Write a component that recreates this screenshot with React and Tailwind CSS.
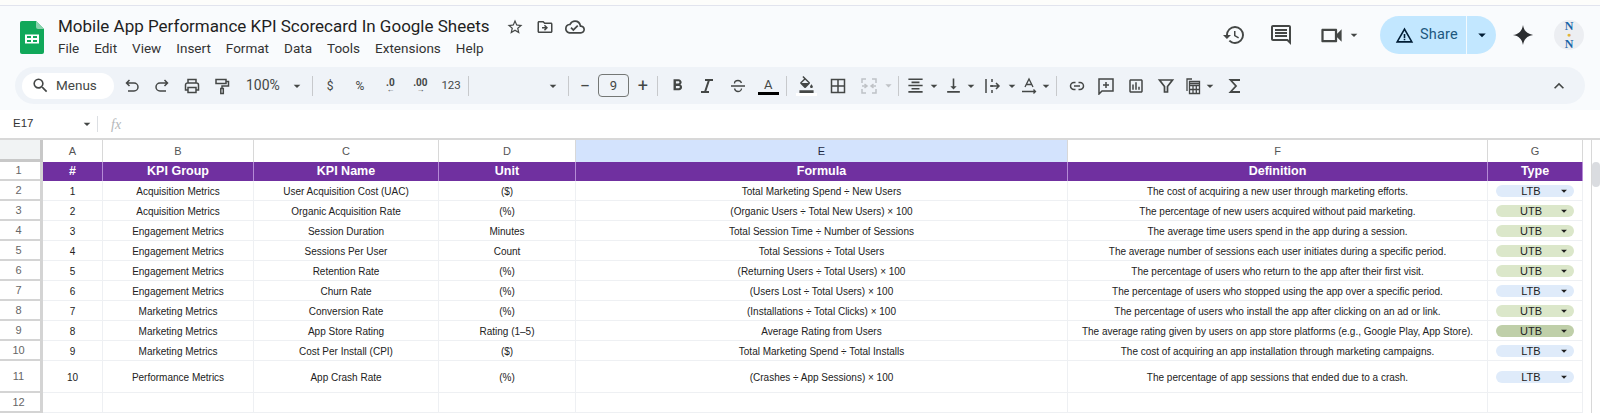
import React from "react";
import {
  MdArrowDropDown,
  MdExpandLess,
  MdFormatAlignCenter,
  MdFormatBold,
  MdFormatColorFill,
  MdHistory,
  MdOutlineCloudDone,
  MdOutlineComment,
  MdOutlineDriveFileMove,
  MdOutlineInsertChart,
  MdOutlineStarBorder,
  MdOutlineVideocam,
  MdSearch,
  MdVerticalAlignBottom,
  MdWarningAmber,
} from "react-icons/md";

const rows = [
  ["1", "Acquisition Metrics", "User Acquisition Cost (UAC)", "($)", "Total Marketing Spend ÷ New Users", "The cost of acquiring a new user through marketing efforts.", "LTB"],
  ["2", "Acquisition Metrics", "Organic Acquisition Rate", "(%)", "(Organic Users ÷ Total New Users) × 100", "The percentage of new users acquired without paid marketing.", "UTB"],
  ["3", "Engagement Metrics", "Session Duration", "Minutes", "Total Session Time ÷ Number of Sessions", "The average time users spend in the app during a session.", "UTB"],
  ["4", "Engagement Metrics", "Sessions Per User", "Count", "Total Sessions ÷ Total Users", "The average number of sessions each user initiates during a specific period.", "UTB"],
  ["5", "Engagement Metrics", "Retention Rate", "(%)", "(Returning Users ÷ Total Users) × 100", "The percentage of users who return to the app after their first visit.", "UTB"],
  ["6", "Engagement Metrics", "Churn Rate", "(%)", "(Users Lost ÷ Total Users) × 100", "The percentage of users who stopped using the app over a specific period.", "LTB"],
  ["7", "Marketing Metrics", "Conversion Rate", "(%)", "(Installations ÷ Total Clicks) × 100", "The percentage of users who install the app after clicking on an ad or link.", "UTB"],
  ["8", "Marketing Metrics", "App Store Rating", "Rating (1–5)", "Average Rating from Users", "The average rating given by users on app store platforms (e.g., Google Play, App Store).", "UTBD"],
  ["9", "Marketing Metrics", "Cost Per Install (CPI)", "($)", "Total Marketing Spend ÷ Total Installs", "The cost of acquiring an app installation through marketing campaigns.", "LTB"],
  ["10", "Performance Metrics", "App Crash Rate", "(%)", "(Crashes ÷ App Sessions) × 100", "The percentage of app sessions that ended due to a crash.", "LTB"],
];

const cols = "grid grid-cols-[43px_60px_151px_185px_137px_492px_420px_95px_9px_8px]";

function Sep({ className = "mx-[7px]" }) {
  return <div className={"h-[20px] w-px bg-[#c7c9cc] " + className} />;
}

function Caret({ className = "" }) {
  return <MdArrowDropDown className={"text-[16px] text-[#444746] " + className} />;
}

// toolbar glyph drawn on an 18 box
function Glyph({ d, className = "", width = 1.5, color = "#444746" }) {
  return (
    <svg viewBox="0 0 18 18" className={"h-[18px] w-[18px] shrink-0 " + className} fill="none" stroke={color} strokeWidth={width}>
      <path d={d} />
    </svg>
  );
}

function Chip({ type }) {
  const label = type === "UTBD" ? "UTB" : type;
  const bg = type === "LTB" ? "bg-[#dfebfa]" : type === "UTBD" ? "bg-[#bfcfa9]" : "bg-[#dbe7ca]";
  return (
    <div className={"relative mx-auto flex h-[12px] w-[78px] items-center justify-center rounded-full pr-[8px] text-[11px] " + bg}>
      <span>{label}</span>
      <MdArrowDropDown className="absolute right-[3px] text-[14px] text-[#222]" />
    </div>
  );
}

function Row({ num, row, height }) {
  return (
    <div className={cols + " text-center text-[10px] text-[#222] " + height}>
      <div className="flex items-center justify-center border-r-[3px] border-b-2 border-[#d4d4d4] bg-white pr-[3px] text-[11px] text-[#666]">{num}</div>
      {row.map((cell, i) => (
        <div key={i} className="flex items-center justify-center border-r border-b border-[#eef0f3] pt-px whitespace-nowrap">
          {cell === null ? "" : i === 6 ? <Chip type={cell} /> : cell}
        </div>
      ))}
      <div className="border-r border-[#d8d8d8]" />
      <div className="bg-white" />
    </div>
  );
}

export default function App() {
  return (
    <div className="h-[414px] w-[1600px] overflow-hidden bg-white font-['Liberation_Sans',Arial,sans-serif]">
      <div className="h-[110px] border-t-[5px] border-[#fdfdfb] bg-[#f9fbfd]">
        <div className="h-px bg-[#e2e4ee]" />
        <div className="flex h-[61px] items-start pl-[20px] pr-[16px] font-['Roboto',sans-serif] text-[#1f1f1f]">
          <svg viewBox="0 0 24 33" className="mt-[15px] h-[33px] w-[24px]">
            <path d="M2 0h14l8 8v23a2 2 0 0 1-2 2H2a2 2 0 0 1-2-2V2a2 2 0 0 1 2-2z" fill="#11a85a" />
            <path d="M16 0l8 8h-6a2 2 0 0 1-2-2z" fill="#8ad3ae" />
            <path d="M5 13.500h14v9H5z M7 15v2h4v-2z M13 15v2h4v-2z M7 19v2h4v-2z M13 19v2h4v-2z" fill="#fff" fillRule="evenodd" />
          </svg>
          <div className="ml-[14px] mt-[10px]">
            <div className="flex h-[22px] items-center">
              <span className="w-[440px] text-[17px] whitespace-nowrap">Mobile App Performance KPI Scorecard In Google Sheets</span>
              <MdOutlineStarBorder className="ml-[8px] text-[18px] text-[#444746]" />
              <MdOutlineDriveFileMove className="ml-[12px] text-[18px] text-[#444746]" />
              <MdOutlineCloudDone className="ml-[11px] text-[20px] text-[#444746]" />
            </div>
            <div className="flex gap-[15px] text-[13.500px] text-[#333]">
              <span>File</span>
              <span>Edit</span>
              <span>View</span>
              <span>Insert</span>
              <span>Format</span>
              <span>Data</span>
              <span>Tools</span>
              <span>Extensions</span>
              <span>Help</span>
            </div>
          </div>
          <div className="ml-auto mt-[10px] flex items-center text-[#444746]">
            <MdHistory className="text-[24px]" />
            <MdOutlineComment className="ml-[23px] text-[24px]" />
            <MdOutlineVideocam className="ml-[25px] text-[27px]" />
            <Caret className="ml-[1px]" />
            <div className="ml-[18px] flex h-[38px] w-[116px] items-center rounded-full bg-[#c2e7ff]">
              <MdWarningAmber className="ml-[15px] text-[19px] text-[#001d35]" />
              <span className="ml-[6px] w-[46px] text-[14.500px] tracking-[0.2px] text-[#20587e]">Share</span>
              <div className="h-full w-px bg-[#f3fafe]" />
              <MdArrowDropDown className="ml-[6px] text-[18px] text-[#001d35]" />
            </div>
            <svg viewBox="0 0 24 24" className="ml-[16px] h-[22px] w-[22px]">
              <path d="M12 1c1 6.500 4.500 10 11 11-6.500 1-10 4.500-11 11-1-6.500-4.500-10-11-11 6.500-1 10-4.500 11-11z" fill="#2b2d30" />
            </svg>
            <div className="ml-[20px] flex h-[30px] w-[30px] flex-col items-center justify-center rounded-full bg-[#eceef2] font-['Liberation_Serif',serif] text-[12px] leading-[10px] font-bold text-[#1b66a8]">
              <span>N</span>
              <span className="h-[8px] text-[7px] leading-[8px] text-[#e2b33c]">●</span>
              <span>N</span>
            </div>
          </div>
        </div>
        <div className="mx-[15px] flex h-[37px] items-center rounded-full bg-[#eff3f8] pl-[7px] pr-[16px] font-['Roboto',sans-serif] text-[#444746]">
          <div className="flex h-[26px] w-[92px] items-center rounded-full bg-white pl-[9px]">
            <MdSearch className="text-[19px]" />
            <span className="ml-[6px] text-[13.500px]">Menus</span>
          </div>
          <Glyph className="ml-[9px]" d="M6.500 3L3.500 6l3 3M3.500 6H11a4 4 0 0 1 0 8H5" />
          <Glyph className="ml-[12px] -scale-x-100" d="M6.500 3L3.500 6l3 3M3.500 6H11a4 4 0 0 1 0 8H5" />
          <Glyph className="ml-[12px]" d="M5 6V2.500h8V6M5 13H2.500V8a2 2 0 0 1 2-2h9a2 2 0 0 1 2 2v5H13M5 10.500h8v5H5z" />
          <Glyph className="ml-[12px]" d="M3 2.500h10v4H3zM13 4.500h2.500V9H9v2.500M7.800 11.500h2.500v5H7.800z" />
          <span className="ml-[15px] text-[14px]">100%</span>
          <Caret className="ml-[9px]" />
          <Sep />
          <span className="ml-[7px] text-[12px]">$</span>
          <span className="ml-[22px] text-[12px]">%</span>
          <span className="ml-[18px] flex w-[16px] flex-col items-center text-[10px] leading-[9px] font-bold">.0<span className="text-[8px] leading-[6px]">←</span></span>
          <span className="ml-[14px] flex w-[16px] flex-col items-center text-[10px] leading-[9px] font-bold">.00<span className="text-[8px] leading-[6px]">→</span></span>
          <span className="ml-[13px] text-[11.500px]">123</span>
          <Sep />
          <div className="w-[69px]" />
          <Caret />
          <Sep />
          <span className="ml-[2px] w-[14px] text-center text-[18px]">−</span>
          <div className="ml-[6px] flex h-[23px] w-[31px] items-center justify-center rounded-[4px] border border-[#747775] text-[13px]">9</div>
          <span className="ml-[7px] w-[14px] text-center text-[18px]">+</span>
          <Sep />
          <MdFormatBold className="ml-[3px] text-[19px]" />
          <Glyph className="ml-[11px]" width={2} d="M7 3h8M3 15h8M11 3L7 15" />
          <Glyph className="ml-[13px]" width={1.3} d="M2 9h14M5.500 6.500c0-2 1.500-3 3.500-3s3 1 3.500 2.500M5.500 11.500c.5 2 2 3 3.500 3s3.500-1 3.500-3" />
          <div className="ml-[11px] flex w-[21px] flex-col items-center">
            <span className="text-[13px] leading-[15px]">A</span>
            <div className="h-[3px] w-full bg-black" />
          </div>
          <Sep />
          <div className="ml-[2px] flex w-[21px] flex-col items-center">
            <MdFormatColorFill className="text-[17px]" />
            <div className="h-[3px] w-full bg-white" />
          </div>
          <Glyph className="ml-[12px]" d="M2.500 2.500h13v13h-13zM9 2.500v13M2.500 9h13" />
          <Glyph className="ml-[13px]" color="#bfc2c6" d="M2 6V2h4M12 2h4v4M16 12v4h-4M6 16H2v-4M2 9h4.500M4.500 7L7 9l-2.500 2M16 9h-4.500M13.500 7L11 9l2.500 2" />
          <MdArrowDropDown className="ml-[3px] -mr-[5px] text-[15px] text-[#bfc2c6]" />
          <Sep />
          <MdFormatAlignCenter className="text-[19px]" />
          <Caret className="ml-[1px]" />
          <MdVerticalAlignBottom className="ml-[2px] text-[19px]" />
          <Caret />
          <Glyph className="ml-[5px]" d="M2 2v14M8 2v3M8 8v2M8 13v3M6 9h9M12 6l3 3-3 3" />
          <Caret className="ml-[2px]" />
          <Glyph d="M5 10l4-8 4 8M6.500 7.500h5M2 14.500h13M13.500 12.500l2 2-2 2" width={1.3} />
          <Caret className="-mr-[5px]" />
          <Sep />
          <Glyph className="ml-[4px]" d="M7.500 5.500H6a3.500 3.500 0 0 0 0 7h1.500M10.500 5.500H12a3.500 3.500 0 0 1 0 7h-1.500M6 9h6" />
          <Glyph className="ml-[11px]" d="M2 2h14v12H5l-3 3zM9 5v6M6 8h6" />
          <MdOutlineInsertChart className="ml-[12px] text-[18px]" />
          <Glyph className="ml-[12px]" width={1.7} d="M2.500 3h13L10.500 9.500V15h-3V9.500z" />
          <Glyph className="ml-[9px]" width={1.3} d="M8 2H3v12M5.500 4.500h10v12h-10zM5.500 8.500h10M5.500 12.500h10M9 8.500v8M12.300 8.500v8M5.500 6.500h10" />
          <Caret />
          <Glyph className="ml-[8px]" width={1.8} d="M14 3H4.500L10 9l-5.500 6H14" />
          <MdExpandLess className="ml-auto text-[20px]" />
        </div>
      </div>

      <div className="flex h-[28px] items-center text-[11.500px] text-[#333]">
        <span className="ml-[13px] w-[66px]">E17</span>
        <Caret />
        <div className="ml-[2px] h-[16px] w-px bg-[#dcdfe3]" />
        <span className="ml-[13px] font-['Liberation_Serif',serif] text-[14px] text-[#b4b7ba] italic">fx</span>
      </div>

      <div className={cols + " h-[24px] border-t-2 border-[#d8d8d8] text-center text-[11px] text-[#555]"}>
        <div className="border-r-[3px] border-b-[3px] border-[#c8c8c8] bg-[#f1f3f4]" />
        {["A", "B", "C", "D"].map((c) => (
          <div key={c} className="flex items-center justify-center border-r border-[#d8d8d8]">{c}</div>
        ))}
        <div className="flex items-center justify-center border-r border-[#d8d8d8] bg-[#d3e3fd] text-[#1f2a44]">E</div>
        <div className="flex items-center justify-center border-r border-[#d8d8d8]">F</div>
        <div className="flex items-center justify-center border-r border-[#d8d8d8]">G</div>
        <div className="border-r border-[#d8d8d8]" />
        <div className="bg-white" />
      </div>

      <div className={cols + " h-[19px] text-center text-[12.500px] font-bold text-white"}>
        <div className="flex items-center justify-center border-r-[3px] border-b-2 border-[#d4d4d4] bg-white pr-[3px] text-[11px] font-normal text-[#666]">1</div>
        {["#", "KPI Group", "KPI Name", "Unit", "Formula", "Definition", "Type"].map((h) => (
          <div key={h} className="flex items-center justify-center border-r border-[#b58ad6] bg-[#7030a0]">{h}</div>
        ))}
        <div className="border-r border-[#d8d8d8]" />
        <div className="relative bg-white">
          <div className="absolute inset-x-0 top-0 h-[25px] rounded-sm bg-[#dadce0]" />
        </div>
      </div>

      {rows.map((row, i) => (
        <Row key={row[0]} num={i + 2} row={row} height={i === 9 ? "h-[32px]" : "h-[20px]"} />
      ))}
      <Row num={12} row={[null, null, null, null, null, null, null]} height="h-[20px]" />
    </div>
  );
}
